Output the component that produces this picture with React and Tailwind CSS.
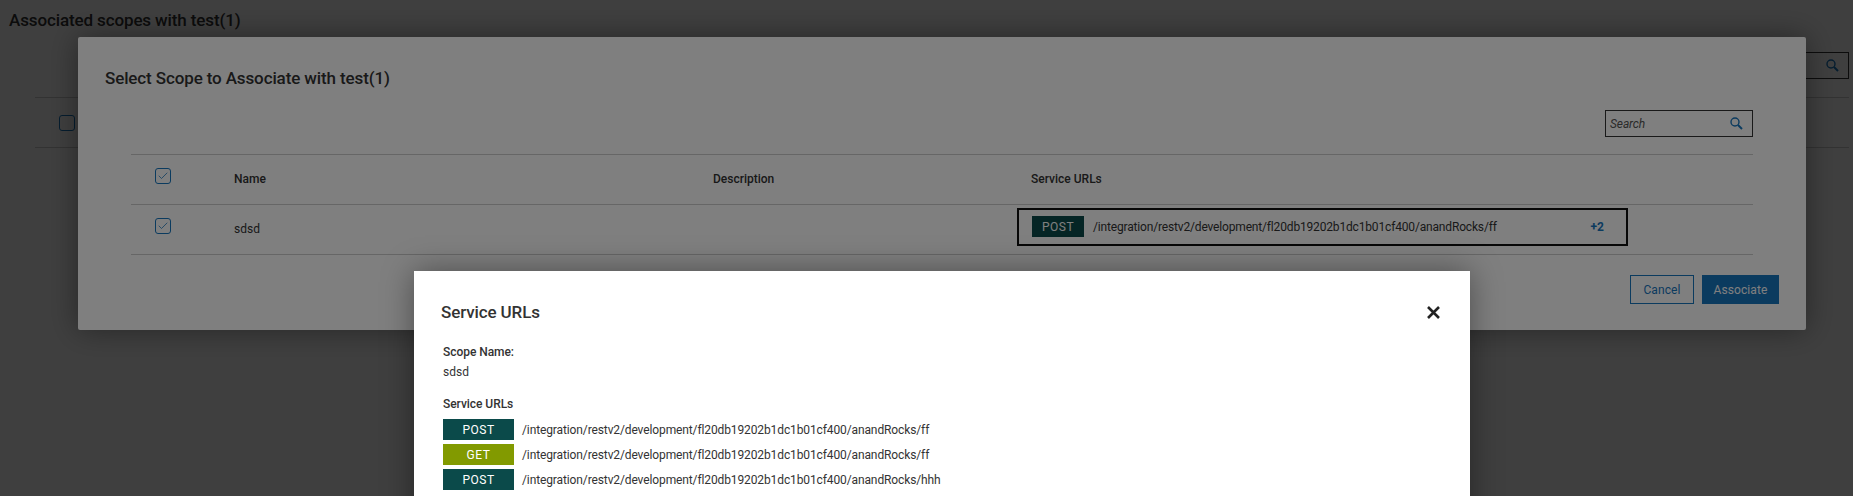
import React from "react";
import { Check } from "lucide-react";

const urls = [
  { method: "POST", path: "/integration/restv2/development/fl20db19202b1dc1b01cf400/anandRocks/ff" },
  { method: "GET", path: "/integration/restv2/development/fl20db19202b1dc1b01cf400/anandRocks/ff" },
  { method: "POST", path: "/integration/restv2/development/fl20db19202b1dc1b01cf400/anandRocks/hhh" },
];

function Checkbox({ checked }) {
  return (
    <div className="w-[16px] h-[16px] rounded-[3px] border border-[#1776bf] flex items-center justify-center">
      {checked && <Check size={12} strokeWidth={1.5} className="text-[#1776bf]" />}
    </div>
  );
}

function SearchIcon() {
  return (
    <svg width="13" height="13" viewBox="0 0 13 13" fill="none" className="text-[#1776bf] -mt-[1px]">
      <circle cx="5" cy="5" r="4" stroke="currentColor" strokeWidth="1.4" />
      <path d="M8 8 12 12" stroke="currentColor" strokeWidth="2" />
    </svg>
  );
}

function Badge({ method, className }) {
  const color = method === "GET" ? "bg-[#829a00]" : "bg-[#0b4a4a]";
  return (
    <span className={`flex items-center justify-center text-white text-[12px] tracking-[0.5px] ${color} ${className}`}>
      {method}
    </span>
  );
}

export default function App() {
  return (
    <div className="relative h-[496px] overflow-hidden bg-white text-[#333] font-['Roboto',sans-serif]">
      {/* page behind */}
      <div className="px-[9px] pt-[9px]">
        <h1 className="text-[17px] leading-[22px] font-medium tracking-[-0.12px]">Associated scopes with test(1)</h1>
      </div>
      <div className="flex justify-end pr-[4px] mt-[21px]">
        <div className="w-[147px] h-[27px] border border-[#333] flex items-center justify-end pr-[9px]">
          <SearchIcon />
        </div>
      </div>
      <div className="ml-[35px] mr-[4px] mt-[18px] h-[51px] border-y border-[#ccc] flex items-center pl-[24px]">
        <Checkbox />
      </div>

      <div className="absolute inset-0 bg-black/50" />

      {/* select scope modal */}
      <div className="absolute left-[78px] top-[37px] w-[1728px] h-[293px] bg-white rounded-[2px] shadow-[0_0_30px_rgba(0,0,0,0.4)]">
        <div className="pl-[27px] pt-[30px]">
          <h2 className="text-[17px] leading-[22px] font-medium tracking-[-0.12px]">Select Scope to Associate with test(1)</h2>
        </div>
        <div className="flex justify-end pr-[53px] mt-[21px]">
          <div className="w-[148px] h-[27px] border border-[#333] flex items-center justify-between pl-[4px] pr-[9px]">
            <span className="text-[12px] italic text-[#555] tracking-[-0.1px]">Search</span>
            <SearchIcon />
          </div>
        </div>
        <div className="ml-[53px] mr-[53px] mt-[17px] border-t border-[#ccc]">
          <div className="grid grid-cols-[103px_479px_318px_1fr] items-center h-[50px] border-b border-[#ccc] text-[12px] font-medium">
            <div className="pl-[24px] pb-[7px]"><Checkbox checked /></div>
            <div className="pb-[2px]">Name</div>
            <div className="pb-[2px]">Description</div>
            <div className="pb-[2px]">Service URLs</div>
          </div>
          <div className="grid grid-cols-[103px_479px_318px_1fr] items-center h-[50px] border-b border-[#ccc] text-[12px]">
            <div className="pl-[24px] pb-[7px]"><Checkbox checked /></div>
            <div className="pb-[2px]">sdsd</div>
            <div />
            <div className="-ml-[14px] -mt-[6px] w-[611px] h-[38px] border-2 border-[#111] flex items-center pl-[13px] pr-[22px]">
              <Badge method="POST" className="w-[52px] h-[21px]" />
              <span className="ml-[9px] flex-1 tracking-[-0.165px]">{urls[0].path}</span>
              <span className="font-bold text-[#1776bf]">+2</span>
            </div>
          </div>
        </div>
        <div className="flex justify-end gap-[8px] pr-[27px] mt-[20px]">
          <button className="w-[64px] h-[29px] border border-[#1776bf] text-[#1776bf] text-[12px] tracking-[0.1px]">Cancel</button>
          <button className="w-[77px] h-[29px] bg-[#1776bf] text-white text-[12px] tracking-[0.1px]">Associate</button>
        </div>
      </div>

      <div className="absolute inset-0 bg-black/50" />

      {/* service urls modal */}
      <div className="absolute left-[414px] top-[271px] w-[1056px] h-[260px] bg-white shadow-[0_0_30px_rgba(0,0,0,0.4)] pl-[27px] pr-[30px] pt-[30px]">
        <div className="flex items-center justify-between h-[22px]">
          <h2 className="text-[17px] leading-[22px] font-medium tracking-[-0.12px]">Service URLs</h2>
          <svg width="13" height="13" viewBox="0 0 13 13" className="text-[#222]">
            <path d="M1 1 12 12M12 1 1 12" stroke="currentColor" strokeWidth="2.6" fill="none" />
          </svg>
        </div>
        <div className="ml-[2px] mt-[20px] text-[12px]">
          <div className="leading-[18px] font-medium tracking-[-0.05px]">Scope Name:</div>
          <div className="leading-[18px] mt-[2px]">sdsd</div>
          <div className="leading-[18px] font-medium mt-[14px] tracking-[-0.05px]">Service URLs</div>
          <div className="flex flex-col gap-[4px] mt-[6px]">
            {urls.map((u, i) => (
              <div key={i} className="flex items-center gap-[8px]">
                <Badge method={u.method} className="w-[71px] h-[21px]" />
                <span className="tracking-[-0.115px]">{u.path}</span>
              </div>
            ))}
          </div>
        </div>
      </div>
    </div>
  );
}
